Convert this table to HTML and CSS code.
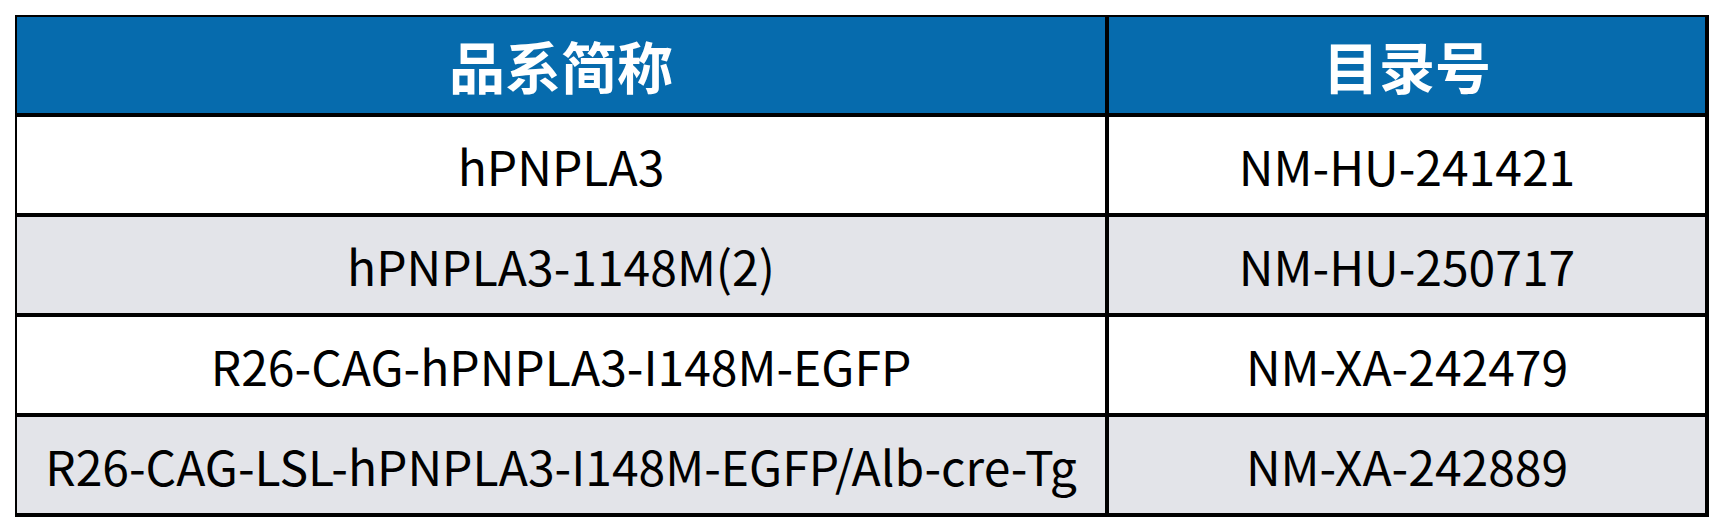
FILE: index.html
```html
<!DOCTYPE html>
<html lang="zh-CN">
<head>
<meta charset="utf-8">
<title>品系</title>
<link rel="stylesheet" href="styles.css">
</head>
<body>
<table class="strain-table">
  <colgroup>
    <col class="col-name">
    <col class="col-id">
  </colgroup>
  <thead>
    <tr><th>品系简称</th><th>目录号</th></tr>
  </thead>
  <tbody>
    <tr><td>hPNPLA3</td><td>NM-HU-241421</td></tr>
    <tr class="alt"><td>hPNPLA3-1148M(2)</td><td>NM-HU-250717</td></tr>
    <tr><td>R26-CAG-hPNPLA3-I148M-EGFP</td><td>NM-XA-242479</td></tr>
    <tr class="alt"><td>R26-CAG-LSL-hPNPLA3-I148M-EGFP/Alb-cre-Tg</td><td>NM-XA-242889</td></tr>
  </tbody>
</table>
</body>
</html>
```
FILE: styles.css
```css
html, body {
  margin: 0;
  padding: 0;
  background: #ffffff;
}
body {
  padding: 15px 0 0 15px;
  font-family: "Noto Sans CJK SC", "Noto Sans", sans-serif;
}
.strain-table {
  border-collapse: separate;
  border-spacing: 0;
  border-left: 2px solid #000;
  border-top: 2px solid #000;
  table-layout: fixed;
  width: 1694px;
}
.col-name { width: 1092px; }
.col-id { width: 600px; }
.strain-table th,
.strain-table td {
  border-right: 4px solid #000;
  border-bottom: 4px solid #000;
  height: 96px;
  padding: 0;
  text-align: center;
  vertical-align: middle;
  box-sizing: content-box;
}
.strain-table th {
  background: #066bad;
  color: #ffffff;
  font-size: 56px;
  font-weight: 700;
  line-height: 1;
}
.strain-table td {
  background: #ffffff;
  color: #000000;
  font-size: 48px;
  font-weight: 400;
  line-height: 1;
}
.strain-table tr.alt td {
  background: #e3e4e9;
}
```
